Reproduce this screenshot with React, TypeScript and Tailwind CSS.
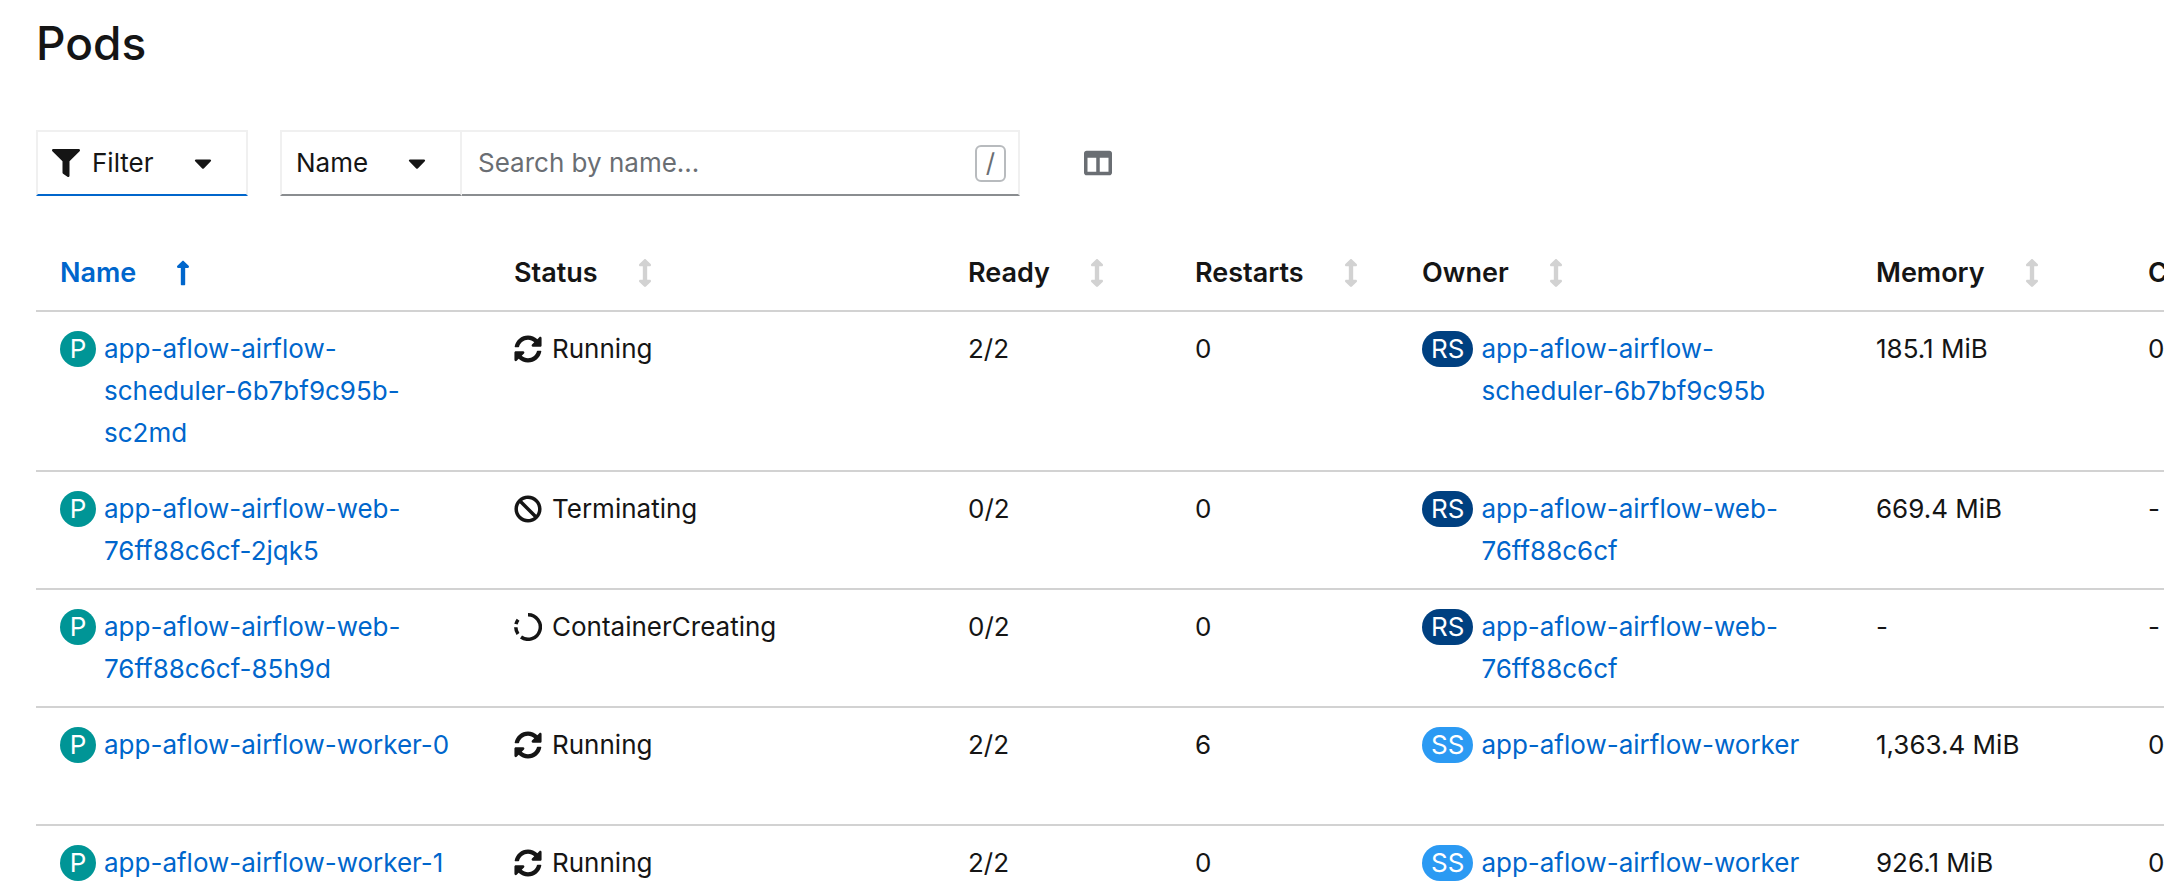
import { FaArrowsAltV, FaBan, FaCaretDown, FaColumns, FaFilter, FaLongArrowAltUp, FaSyncAlt } from "react-icons/fa";

type Status = "Running" | "Terminating" | "ContainerCreating";
type Kind = "P" | "RS" | "SS";

interface Pod {
  name: string;
  status: Status;
  ready: string;
  restarts: number;
  ownerKind: Kind;
  owner: string;
  memory: string;
  cpu: string;
}

const pods: Pod[] = [
  {
    name: "app-aflow-airflow-scheduler-6b7bf9c95b-sc2md",
    status: "Running",
    ready: "2/2",
    restarts: 0,
    ownerKind: "RS",
    owner: "app-aflow-airflow-scheduler-6b7bf9c95b",
    memory: "185.1 MiB",
    cpu: "0",
  },
  {
    name: "app-aflow-airflow-web-76ff88c6cf-2jqk5",
    status: "Terminating",
    ready: "0/2",
    restarts: 0,
    ownerKind: "RS",
    owner: "app-aflow-airflow-web-76ff88c6cf",
    memory: "669.4 MiB",
    cpu: "-",
  },
  {
    name: "app-aflow-airflow-web-76ff88c6cf-85h9d",
    status: "ContainerCreating",
    ready: "0/2",
    restarts: 0,
    ownerKind: "RS",
    owner: "app-aflow-airflow-web-76ff88c6cf",
    memory: "-",
    cpu: "-",
  },
  {
    name: "app-aflow-airflow-worker-0",
    status: "Running",
    ready: "2/2",
    restarts: 6,
    ownerKind: "SS",
    owner: "app-aflow-airflow-worker",
    memory: "1,363.4 MiB",
    cpu: "0",
  },
  {
    name: "app-aflow-airflow-worker-1",
    status: "Running",
    ready: "2/2",
    restarts: 0,
    ownerKind: "SS",
    owner: "app-aflow-airflow-worker",
    memory: "926.1 MiB",
    cpu: "0",
  },
];

const columns = [
  { label: "Name", width: "w-[454px]" },
  { label: "Status", width: "w-[454px]" },
  { label: "Ready", width: "w-[227px]" },
  { label: "Restarts", width: "w-[227px]" },
  { label: "Owner", width: "w-[454px]" },
  { label: "Memory", width: "w-[272px]" },
  { label: "CPU", width: "" },
];

const badgeColors: Record<Kind, string> = {
  P: "bg-[#009596]",
  RS: "bg-[#004080]",
  SS: "bg-[#2b9af3]",
};

function InProgressIcon() {
  return (
    <svg viewBox="0 0 28 28" className="size-7" fill="none" stroke="currentColor" strokeWidth="3.5" aria-hidden="true">
      <path d="M14 1.75A12.25 12.25 0 1 1 7 24" />
      <path d="M4 21A12.25 12.25 0 0 1 1.8 14.2" />
      <path d="M2 11.2A12.25 12.25 0 0 1 4.1 6.8" />
    </svg>
  );
}

function StatusIcon({ status }: { status: Status }) {
  if (status === "Running") return <FaSyncAlt className="size-7" aria-hidden="true" />;
  if (status === "Terminating") return <FaBan className="size-7" aria-hidden="true" />;
  return <InProgressIcon />;
}

function ResourceLink({ kind, name }: { kind: Kind; name: string }) {
  return (
    <div className="flex items-start gap-2">
      <span
        className={`mt-[3px] flex h-9 min-w-9 shrink-0 items-center justify-center rounded-full px-[9px] leading-9 text-white ${badgeColors[kind]}`}
      >
        {kind}
      </span>
      <a href="#" className="text-[#0066cc]">
        {name}
      </a>
    </div>
  );
}

export default function App() {
  const cell = "border-b-2 border-[#d2d2d2] py-4 pr-8 pl-6 align-top";
  return (
    <main className="h-screen overflow-hidden bg-white pt-3 pl-9 font-['Inter',sans-serif] text-[26px] leading-[42px] text-[#151515]">
      <h1 className="text-[46px] leading-[62px] font-medium">Pods</h1>

      <div className="mt-14 flex items-center">
        <button
          type="button"
          className="flex h-[66px] items-center border-2 border-[#f0f0f0] border-b-[#0066cc] pr-[34px] pl-3.5"
        >
          <FaFilter className="size-7" aria-hidden="true" />
          <span className="ml-3 w-[102px] text-left">Filter</span>
          <FaCaretDown className="h-7 w-[18px]" aria-hidden="true" />
        </button>

        <div className="ml-8 flex h-[66px]">
          <button
            type="button"
            className="flex items-center border-2 border-[#f0f0f0] border-b-[#8a8d90] pr-[34px] pl-3.5"
          >
            <span className="w-28 text-left">Name</span>
            <FaCaretDown className="h-7 w-[18px]" aria-hidden="true" />
          </button>
          <div className="flex w-[558px] items-center border-2 border-l-0 border-[#f0f0f0] border-b-[#8a8d90] pr-3 pl-4">
            <input
              type="text"
              aria-label="Search by name"
              placeholder="Search by name..."
              className="min-w-0 flex-1 bg-transparent outline-none placeholder:text-[#6a6e73]"
            />
            <kbd className="flex h-[37px] w-[31px] items-center justify-center rounded-md border-2 border-[#b8bbbe] font-['Inter',sans-serif] text-[#6a6e73]">
              /
            </kbd>
          </div>
        </div>

        <button type="button" aria-label="Manage columns" className="ml-16 text-[#6a6e73]">
          <FaColumns className="size-7" aria-hidden="true" />
        </button>
      </div>

      <table className="mt-10 w-full table-fixed border-separate border-spacing-0">
        <thead>
          <tr className="h-[76px]">
            {columns.map(({ label, width }, index) => (
              <th
                key={label}
                scope="col"
                aria-sort={index === 0 ? "ascending" : "none"}
                className={`overflow-hidden border-b-2 border-[#d2d2d2] pl-6 text-left text-[27px] font-semibold ${width}`}
              >
                <button
                  type="button"
                  className={`flex items-center gap-10 whitespace-nowrap ${index === 0 ? "text-[#0066cc]" : ""}`}
                >
                  {label}
                  {index === 0 ? (
                    <FaLongArrowAltUp className="h-7 w-3.5" aria-hidden="true" />
                  ) : (
                    <FaArrowsAltV className="h-7 w-3.5 text-[#d2d2d2]" aria-hidden="true" />
                  )}
                </button>
              </th>
            ))}
          </tr>
        </thead>
        <tbody>
          {pods.map((pod) => (
            <tr key={pod.name} className="h-[118px]">
              <td className={cell}>
                <ResourceLink kind="P" name={pod.name} />
              </td>
              <td className={cell}>
                <span className="flex items-center gap-2.5">
                  <StatusIcon status={pod.status} />
                  {pod.status}
                </span>
              </td>
              <td className={cell}>{pod.ready}</td>
              <td className={cell}>{pod.restarts}</td>
              <td className={cell}>
                <ResourceLink kind={pod.ownerKind} name={pod.owner} />
              </td>
              <td className={cell}>{pod.memory}</td>
              <td className="border-b-2 border-[#d2d2d2] py-4 pl-6 align-top">{pod.cpu}</td>
            </tr>
          ))}
        </tbody>
      </table>
    </main>
  );
}
